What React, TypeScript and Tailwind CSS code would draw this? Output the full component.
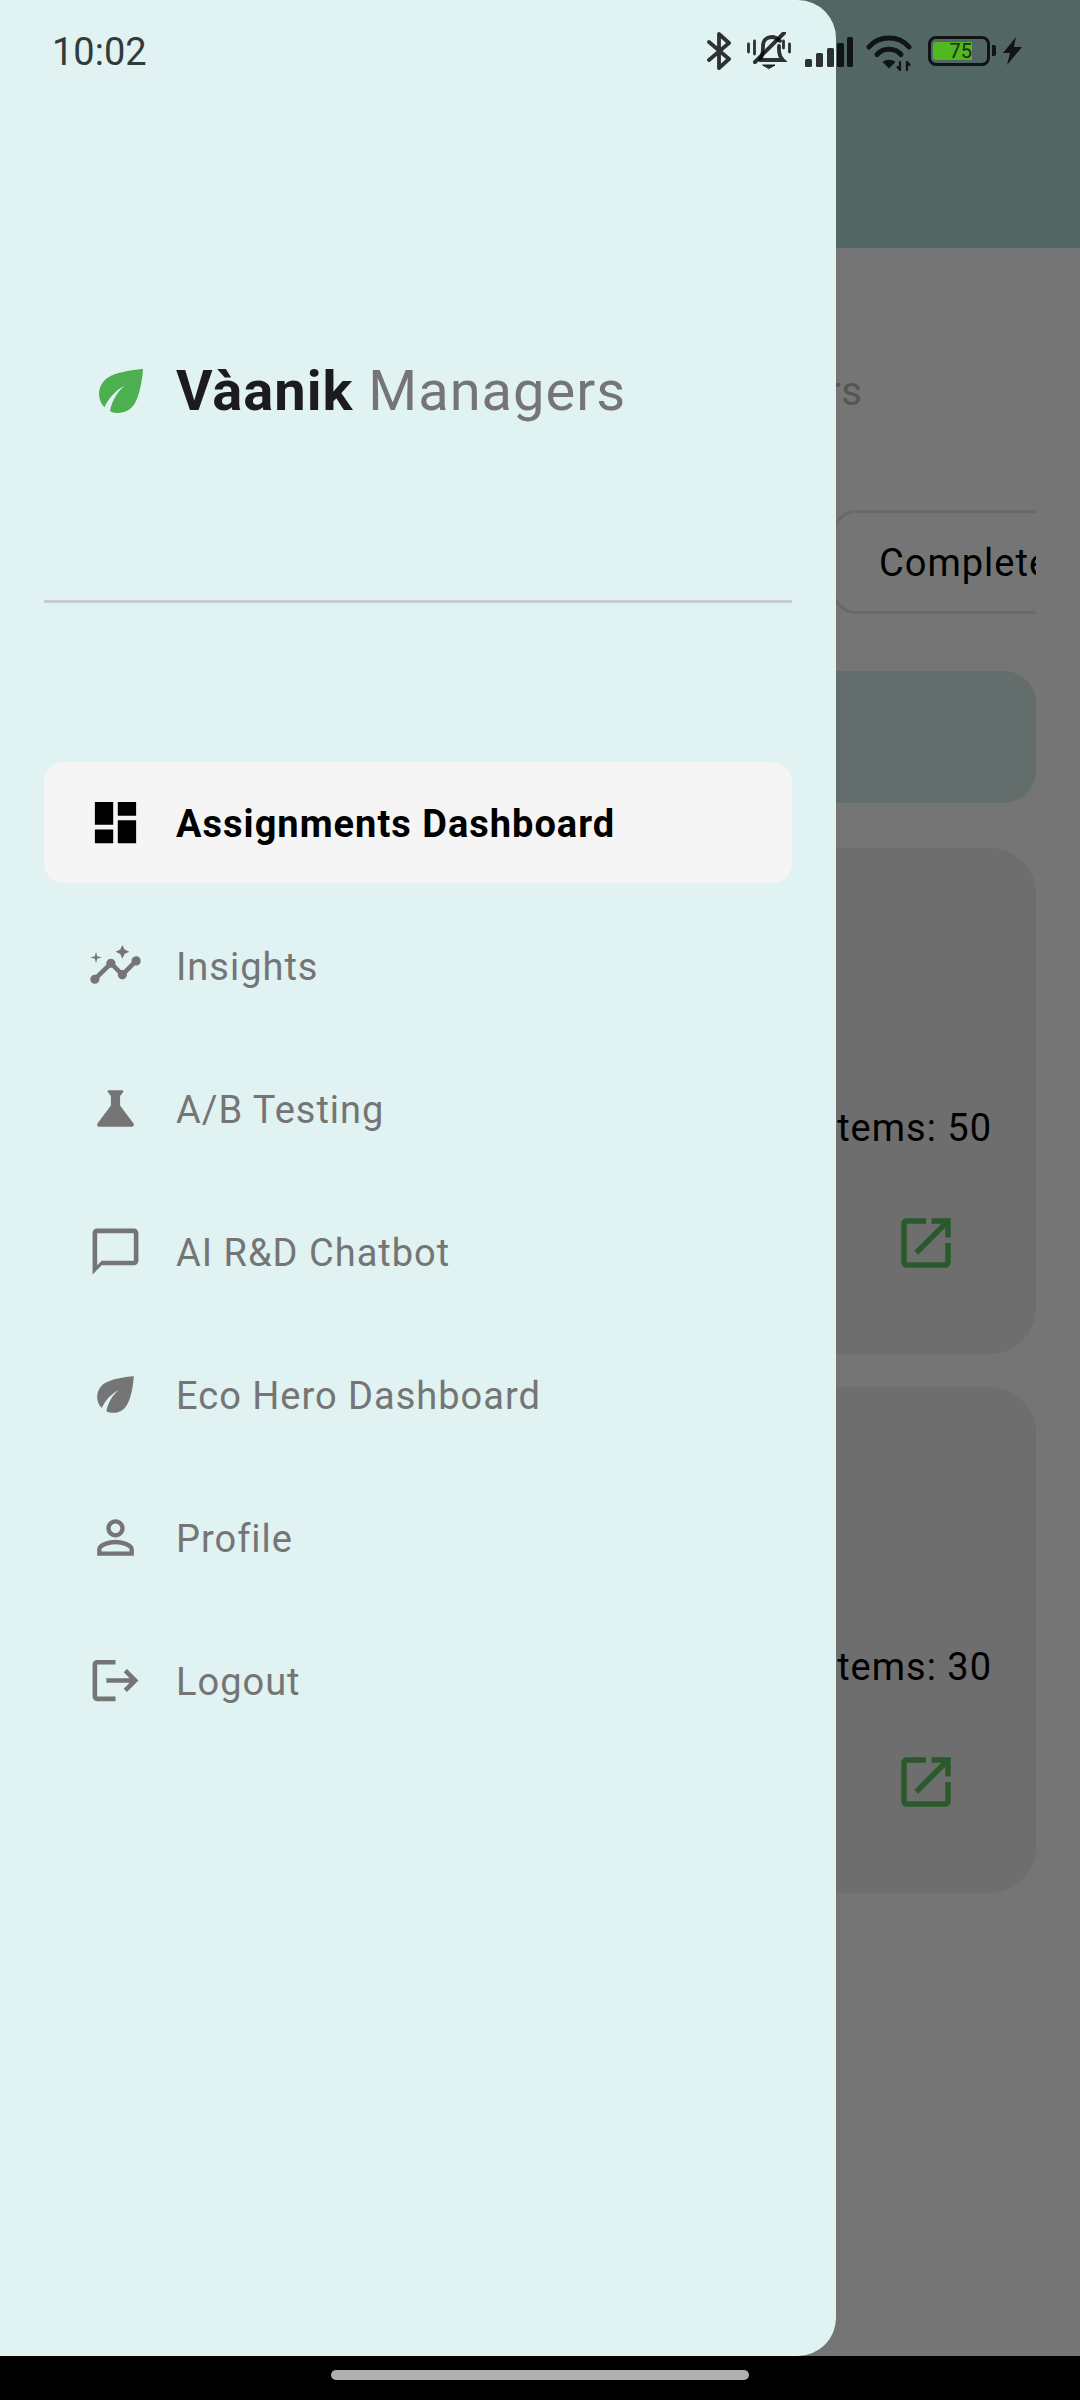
const ECO = "M6.05 8.05c-2.73 2.73-2.73 7.15-.02 9.88 1.47-3.4 4.09-6.24 7.36-7.93-2.77 2.34-4.71 5.61-5.39 9.32 2.6 1.23 5.8.78 7.95-1.37C19.43 14.47 20 4 20 4S9.53 4.57 6.05 8.05z";
const OPEN = "M19 19H5V5h7V3H5c-1.11 0-2 .9-2 2v14c0 1.1.89 2 2 2h14c1.1 0 2-.9 2-2v-7h-2v7zM14 3v2h3.59l-9.83 9.83 1.41 1.41L19 6.41V10h2V3h-7z";

const items = [
  { label: "Insights", d: "M21 8c-1.45 0-2.26 1.44-1.93 2.51l-3.55 3.56c-.3-.09-.74-.09-1.04 0l-2.55-2.55C12.27 10.45 11.46 9 10 9c-1.45 0-2.27 1.44-1.93 2.52l-4.56 4.55C2.44 15.74 1 16.55 1 18c0 1.1.9 2 2 2 1.45 0 2.26-1.44 1.93-2.51l4.55-4.56c.3.09.74.09 1.04 0l2.55 2.55C12.73 16.55 13.54 18 15 18c1.45 0 2.27-1.44 1.93-2.52l3.56-3.55c1.07.33 2.51-.48 2.51-1.93 0-1.1-.9-2-2-2zM15 9l.94-2.07L18 6l-2.06-.93L15 3l-.92 2.07L12 6l2.08.93zM3.5 11L4 9l2-.5L4 8l-.5-2L3 8l-2 .5L3 9z" },
  { label: "A/B Testing", d: "M19.8 18.4L14 10.67V6.5l1.35-1.69c.26-.33.03-.81-.39-.81H9.04c-.42 0-.65.48-.39.81L10 6.5v4.17L4.2 18.4c-.49.66-.02 1.6.8 1.6h14c.82 0 1.29-.94.8-1.6z" },
  { label: "AI R&D Chatbot", d: "M20 2H4c-1.1 0-2 .9-2 2v18l4-4h14c1.1 0 2-.9 2-2V4c0-1.1-.9-2-2-2zm0 14H6l-2 2V4h16v12z" },
  { label: "Eco Hero Dashboard", d: ECO },
  { label: "Profile", d: "M12 5.9c1.16 0 2.1.94 2.1 2.1s-.94 2.1-2.1 2.1S9.9 9.16 9.9 8s.94-2.1 2.1-2.1m0 9c2.97 0 6.1 1.46 6.1 2.1v1.1H5.9V17c0-.64 3.13-2.1 6.1-2.1M12 4C9.79 4 8 5.79 8 8s1.79 4 4 4 4-1.79 4-4-1.79-4-4-4zm0 9c-2.67 0-8 1.34-8 4v3h16v-3c0-2.66-5.33-4-8-4z" },
  { label: "Logout", d: "M17 7l-1.41 1.41L18.17 11H8v2h10.17l-2.58 2.58L17 17l5-5zM4 5h8V3H4c-1.1 0-2 .9-2 2v14c0 1.1.9 2 2 2h8v-2H4V5z" },
];

function Mi({ d, className }: { d: string; className: string }) {
  return (
    <svg viewBox="0 0 24 24" fill="currentColor" className={className}>
      <path d={d} />
    </svg>
  );
}

function TaskCard({ count }: { count: number }) {
  return (
    <div className="ml-[44px] mr-[44px] h-[506px] rounded-[46px] bg-[#6e6e6e] flex flex-col items-end pr-[44px] pt-[258px]">
      <div className="text-[38px] leading-[44px] tracking-[1px] text-black">Items: {count}</div>
      <Mi d={OPEN} className="w-[66px] h-[66px] mt-[60px] mr-[33px] text-[#2a5a2c]" />
    </div>
  );
}

function StatusBar() {
  return (
    <div className="absolute top-0 left-0 w-[1080px] h-[102px] flex items-start pl-[52px] text-black/80">
      <div className="mt-[31px] text-[38px] leading-[43px] text-[#343a3a]">10:02</div>
      <div className="ml-auto mr-[58px] mt-[32px] flex items-start">
        <svg viewBox="0 0 25 38" className="w-[25px] h-[38px]" fill="none" stroke="currentColor" strokeWidth="3.8" strokeLinejoin="round" strokeLinecap="round">
          <path d="M2 10 L22 27 L12 36 V2 L22 11 L2 28" />
        </svg>
        <svg viewBox="0 0 44 38" className="ml-[15px] w-[44px] h-[38px]" fill="none" stroke="currentColor" strokeWidth="3.8" strokeLinecap="round">
          <path d="M14 26 C16 22 16 18 16 14 C16 8 20 5 25 5 C29 5 31 7 33 9" />
          <path d="M32 14 V18 C32 22 33 25 36 28 H13" />
          <path d="M8 30 L37 1" strokeWidth="4" />
          <path d="M1.5 12 V20 M7.5 9 V22 M36.5 9 V16 M42.5 12 V20" strokeWidth="2.8" />
          <path d="M16 33 H28 L22 36.5 Z" fill="currentColor" strokeWidth="1" />
        </svg>
        <svg viewBox="0 0 48 30" className="ml-[14px] mt-[5px] w-[48px] h-[30px]" fill="currentColor">
          <rect x="0" y="22" width="7" height="8" rx="1.5" />
          <rect x="11" y="16" width="7" height="14" rx="1.5" />
          <rect x="22" y="11" width="7" height="19" rx="1.5" />
          <rect x="32" y="6" width="7" height="24" rx="1.5" />
          <rect x="42" y="0" width="6" height="30" rx="1.5" />
        </svg>
        <svg viewBox="0 0 46 36" className="ml-[13px] mt-[3px] w-[46px] h-[36px]" fill="none" stroke="currentColor" strokeLinecap="round">
          <path d="M3 12 C13 0 33 0 43 12" strokeWidth="5" />
          <path d="M11 19.5 C17 12.5 29 12.5 35 19.5" strokeWidth="5" />
          <path d="M16.5 27 L23 33.5 L29.5 27 C26 24 20 24 16.5 27 Z" fill="currentColor" stroke="none" />
          <path d="M34 27 V35 M31.5 32 L34 35 M41 35 V27 M41 27 L43.5 30" strokeWidth="2.2" />
        </svg>
        <div className="ml-[16px] mt-[4px] relative w-[62px] h-[30px] rounded-[8px] border-[3px] border-current">
          <div className="absolute left-[2px] top-[3px] w-[39px] h-[18px] rounded-l-[3px] bg-[#52b81f] flex items-center justify-end text-[20px] leading-[18px] text-[#1d2a14]">75</div>
        </div>
        <div className="ml-[2px] mt-[13px] w-[4px] h-[11px] rounded-r-[2px] bg-current" />
        <svg viewBox="0 0 19 28" className="ml-[7px] mt-[5px] w-[19px] h-[28px]" fill="currentColor">
          <path d="M13 0 L0 16 H7 L4 28 L19 10 H11 Z" />
        </svg>
      </div>
    </div>
  );
}

export default function App() {
  return (
    <div className="relative w-[1080px] h-[2400px] overflow-hidden bg-[#757575]" style={{ fontFamily: "Roboto, sans-serif" }}>
      <div className="h-[248px] bg-[#526664]" />
      <div className="mt-[118px] h-[52px] flex justify-end pr-[217px] text-[40px] leading-[52px] tracking-[1px] text-[#555555]">Managers</div>
      <div className="mt-[92px] ml-[832px] w-[204px] h-[104px] overflow-hidden">
        <div className="w-[300px] h-[104px] rounded-[24px] border-[3px] border-[#696969] pl-[44px] pt-[2px] flex items-center text-[38px] tracking-[1px] text-black">Completed</div>
      </div>
      <div className="mt-[57px] ml-[44px] mr-[44px] h-[132px] rounded-[32px] bg-[#636e6c]" />
      <div className="mt-[45px] flex flex-col gap-[33px]">
        <TaskCard count={50} />
        <TaskCard count={30} />
      </div>

      <div className="absolute top-0 left-0 w-[836px] h-[2356px] bg-[#e0f2f1] rounded-r-[38px] pt-[358px]">
        <div className="flex items-center pl-[88px] gap-[22px]">
          <Mi d={ECO} className="w-[66px] h-[66px] text-[#4caf50]" />
          <div className="text-[56px] leading-[66px] tracking-[1px] whitespace-nowrap">
            <span className="font-bold text-[#1c1b1f]">Vàanik</span>{" "}
            <span className="text-[#757575]">Managers</span>
          </div>
        </div>
        <div className="mt-[176px] ml-[44px] mr-[44px] h-[3px] bg-[#c8cbd4]" />
        <div className="mt-[159px] ml-[44px] mr-[44px] flex flex-col gap-[22px]">
          <div className="h-[121px] rounded-[20px] bg-[#f5f5f5] flex items-center pl-[44px] gap-[33px] text-black">
            <Mi d="M3 13h8V3H3v10zm0 8h8v-6H3v6zm10 0h8V11h-8v10zm0-18v6h8V3h-8z" className="w-[55px] h-[55px]" />
            <span className="text-[38px] leading-[46px] pt-[2px] font-bold tracking-[1px]">Assignments Dashboard</span>
          </div>
          {items.map((it) => (
            <div key={it.label} className="h-[121px] flex items-center pl-[44px] gap-[33px] text-[#757575]">
              <Mi d={it.d} className="w-[55px] h-[55px]" />
              <span className="text-[38px] leading-[46px] pt-[2px] tracking-[1px]">{it.label}</span>
            </div>
          ))}
        </div>
      </div>

      <StatusBar />

      <div className="absolute bottom-0 left-0 w-[1080px] h-[44px] bg-black flex justify-center pt-[14px]">
        <div className="w-[418px] h-[10px] rounded-full bg-[#b0b0b0]" />
      </div>
    </div>
  );
}
